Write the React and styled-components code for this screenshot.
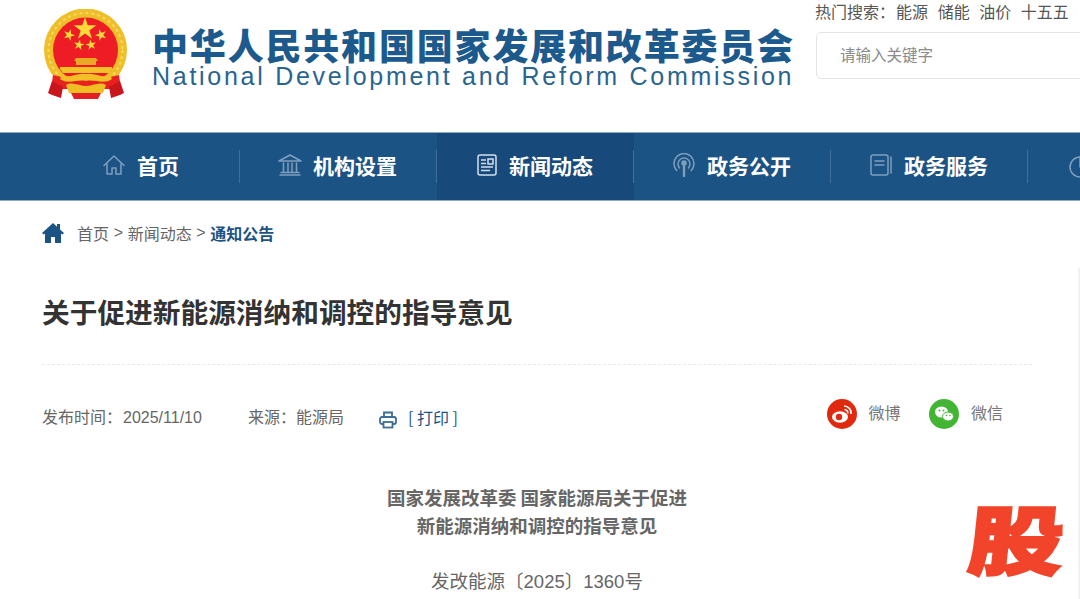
import React from 'react';
import styled, { createGlobalStyle } from 'styled-components';

const GlobalStyle = createGlobalStyle`
  html, body {
    margin: 0;
    padding: 0;
    background: #fff;
    overflow: hidden;
  }
  * {
    box-sizing: border-box;
  }
`;

const Page = styled.div`
  position: relative;
  width: 1080px;
  height: 599px;
  overflow: hidden;
  font-family: "Noto Sans CJK SC", "Liberation Sans", sans-serif;
  color: #666;
`;

const Header = styled.header`
  height: 132px;
  display: flex;
  padding-left: 42px;
`;

const EmblemBox = styled.div`
  width: 88px;
  height: 92px;
  margin: 9px 22px 0 0;
  flex-shrink: 0;
`;

const Brand = styled.div`
  width: 664px;
  flex-shrink: 0;
  padding-top: 24px;
`;

const BrandCn = styled.div`
  font-size: 36px;
  line-height: 40px;
  font-weight: 900;
  letter-spacing: 1.82px;
  color: #1c5a8d;
  white-space: nowrap;
`;

const BrandEn = styled.div`
  font-family: "Liberation Sans", sans-serif;
  font-size: 25px;
  line-height: 24px;
  letter-spacing: 2.72px;
  color: #29648f;
  white-space: nowrap;
`;

const SearchArea = styled.div`
  flex-shrink: 0;
  width: 320px;
`;

const HotRow = styled.div`
  display: flex;
  height: 32px;
  margin-left: -1px;
  font-size: 16px;
  line-height: 23px;
  color: #555;
  white-space: nowrap;
`;

const HotLabel = styled.span`
  margin-right: 1px;
`;

const HotWord = styled.span`
  margin-right: 9.6px;
  color: ${(p) => p.$hot || 'inherit'};
`;

const SearchBox = styled.div`
  height: 47px;
  border: 1px solid #e4e4e4;
  border-radius: 5px;
  padding: 0 0 3px 23px;
  display: flex;
  align-items: center;
  font-size: 15.5px;
  color: #8a8a8a;
`;

const Nav = styled.nav`
  height: 69px;
  display: flex;
  padding-left: 43px;
  background: #1c5385;
  border-top: 1px solid #8fabc4;
  border-bottom: 1px solid #8fabc4;
  overflow: hidden;
`;

const NavItem = styled.div`
  position: relative;
  width: 197px;
  flex-shrink: 0;
  display: flex;
  align-items: center;
  justify-content: ${(p) => (p.$partial ? 'flex-start' : 'center')};
  gap: 11px;
  padding: ${(p) => (p.$partial ? '0 0 0 40px' : '0 2px 3px 0')};
  background: ${(p) => (p.$active ? '#174a7a' : 'transparent')};
  color: #fff;
  font-size: 21px;
  font-weight: 700;

  &::after {
    content: '';
    position: absolute;
    right: 0;
    top: 17px;
    bottom: 17px;
    width: 1px;
    background: #3f709b;
  }
`;

const Crumbs = styled.div`
  height: 67px;
  padding: 0 0 4px 42px;
  display: flex;
  align-items: center;
  font-size: 16px;
  color: #666;
`;

const HomeMark = styled.svg`
  width: 22px;
  height: 20px;
  margin-right: 13px;
`;

const CrumbSep = styled.span`
  font-family: "Liberation Sans", sans-serif;
  margin: 0 4.65px;
`;

const CrumbNow = styled.b`
  color: #1c5385;
`;

const Article = styled.main`
  margin: 0 48px 0 42px;
`;

const Title = styled.h1`
  margin: 0;
  height: 97px;
  padding-top: 23px;
  font-size: 27.7px;
  line-height: 40px;
  font-weight: 700;
  color: #333;
  border-bottom: 1px dashed #e8e8e8;
  white-space: nowrap;
`;

const Meta = styled.div`
  height: 105px;
  display: flex;
  align-items: center;
  padding-bottom: 4px;
  font-size: 16px;
  color: #666;
`;

const MetaText = styled.span`
  margin-right: ${(p) => p.$gap || 0}px;
`;

const Num = styled.span`
  font-family: "Liberation Sans", sans-serif;
`;

const MetaDate = styled(Num)`
  margin-left: 1px;
`;

const PrintIcon = styled.svg`
  width: 18px;
  height: 18px;
  margin-top: 8px;
`;

const PrintLink = styled.span`
  margin: 2px 0 0 11px;
  color: #1c5385;
  font-size: 16px;
  white-space: pre;
`;

const Share = styled.div`
  margin-left: auto;
  margin-right: 29px;
  display: flex;
  align-items: center;
  margin-top: -3px;
`;

const ShareName = styled.span`
  font-size: 16px;
  color: #777;
  margin: 0 29px 4px 11.5px;

  &:last-child {
    margin-right: 0;
  }
`;

const Body = styled.div`
  padding-top: 13px;
  text-align: center;
`;

const Lead = styled.p`
  margin: 0;
  font-size: 18.5px;
  line-height: 28px;
  font-weight: 700;
  color: #666;
`;

const DocNo = styled.p`
  margin: 27px 0 0;
  font-size: 18.5px;
  line-height: 28px;
  color: #666;
`;

const Stamp = styled.div`
  position: absolute;
  left: 971px;
  top: 497px;
  width: 100px;
  font-size: 95px;
  line-height: 100px;
  font-weight: 900;
  color: #f2442a;
  -webkit-text-stroke: 3px #f2442a;
  transform: skewX(-6deg) scaleY(0.79);
  transform-origin: top center;
  text-align: center;
`;

const EdgeLine = styled.div`
  position: absolute;
  right: 0;
  top: 268px;
  bottom: 0;
  width: 2px;
  background: #f1f1f1;
`;

const Star = ({ cx, cy, r, rot = 0 }) => {
  const pts = [];
  for (let i = 0; i < 10; i++) {
    const rad = i % 2 === 0 ? r : r * 0.382;
    const a = ((-90 + rot + i * 36) * Math.PI) / 180;
    pts.push(`${(cx + rad * Math.cos(a)).toFixed(2)},${(cy + rad * Math.sin(a)).toFixed(2)}`);
  }
  return <polygon points={pts.join(' ')} fill="#ffd83a" />;
};

const Emblem = () => (
  <svg width="88" height="92" viewBox="0 0 88 92">
    <circle cx="43.5" cy="41" r="41.5" fill="#eebf2a" />
    <circle cx="43.5" cy="41" r="37" fill="none" stroke="#f8d95e" strokeWidth="2" strokeDasharray="3 3" />
    <circle cx="43.5" cy="41" r="32.5" fill="#ee1c25" />
    <Star cx={43} cy={20} r={12} />
    <Star cx={27} cy={26} r={6} rot={20} />
    <Star cx={59} cy={26} r={6} rot={-20} />
    <Star cx={37} cy={36} r={5.5} rot={10} />
    <Star cx={49} cy={36} r={5.5} rot={-10} />
    <path d="M34 49h20l2 3h-2v4H34v-4h-2z" fill="#e9a924" />
    <path d="M18 58h52v2l-3 4H21l-3-4z" fill="#f3c22b" />
    <path d="M11 66c6 2 9 1 14 4 9 3 11 0 19-1 8 1 10 4 19 1 5-3 8-2 14-4l2 14H9z" fill="#e8201f" />
    <path d="M20 66c8 4 15-3 24-1 9-2 16 5 24 1l2 4c-8 6-17 0-26 2-9-2-18 4-26-2z" fill="#f2c026" />
    <path d="M10 72l11 6-2 11-9-3-4-2zM78 72l-11 6 2 11 9-3 4-2z" fill="#c9161c" />
    <path d="M24 76c6-4 14 1 20 1s14-5 20-1l-3 8H27z" fill="#f0bd22" />
    <path d="M29 84h30l-3 6H32z" fill="#e31e24" />
  </svg>
);

const Line = ({ children, w = 24, h = 24 }) => (
  <svg
    width={w}
    height={h}
    viewBox="0 0 24 24"
    fill="none"
    stroke="#7f9fbd"
    strokeWidth="1.5"
    strokeLinejoin="round"
    strokeLinecap="round"
  >
    {children}
  </svg>
);

const navItems = [
  {
    label: '首页',
    icon: (
      <Line>
        <path d="M2 12.5 12 3l10 9.5M5 11v10h5v-6h4v6h5V11" />
      </Line>
    ),
  },
  {
    label: '机构设置',
    icon: (
      <Line>
        <path d="M1 8 12 2l11 6zM2 22h20M3 19.5h18M5.5 10v9M10 10v9M14 10v9M18.5 10v9" />
      </Line>
    ),
  },
  {
    label: '新闻动态',
    active: true,
    icon: (
      <svg width="22" height="24" viewBox="0 0 22 24" fill="none" stroke="#d5e0ea" strokeWidth="1.5">
        <rect x="2" y="2" width="18" height="20" rx="2" />
        <path d="M5 7h5M5 10.5h5M5 14h12M5 17.5h9" />
        <rect x="12" y="6" width="5" height="5" />
      </svg>
    ),
  },
  {
    label: '政务公开',
    icon: (
      <Line>
        <path d="M12 11v12" strokeWidth="2.4" />
        <circle cx="12" cy="10" r="2" fill="#7f9fbd" />
        <path d="M7.5 15a6 6 0 1 1 9 0M4.8 17.5a10 10 0 1 1 14.4 0" />
      </Line>
    ),
  },
  {
    label: '政务服务',
    icon: (
      <Line>
        <rect x="2" y="2" width="17" height="20" rx="2" />
        <path d="M6 8h9M6 12h9M22 4v16" />
      </Line>
    ),
  },
  {
    partial: true,
    icon: (
      <Line>
        <circle cx="12" cy="12" r="10" />
        <path d="M12 2v10h10" />
      </Line>
    ),
  },
];

const App = () => {
  return (
    <Page>
      <GlobalStyle />
      <Header>
        <EmblemBox>
          <Emblem />
        </EmblemBox>
        <Brand>
          <BrandCn>中华人民共和国国家发展和改革委员会</BrandCn>
          <BrandEn>National Development and Reform Commission</BrandEn>
        </Brand>
        <SearchArea>
          <HotRow>
            <HotLabel>热门搜索：</HotLabel>
            <HotWord>能源</HotWord>
            <HotWord>储能</HotWord>
            <HotWord>油价</HotWord>
            <HotWord>十五五</HotWord>
            <HotWord $hot="#c8741c">电力</HotWord>
          </HotRow>
          <SearchBox>请输入关键字</SearchBox>
        </SearchArea>
      </Header>
      <Nav>
        {navItems.map((item, i) => (
          <NavItem key={i} $active={item.active} $partial={item.partial}>
            {item.icon}
            {item.label && <span>{item.label}</span>}
          </NavItem>
        ))}
      </Nav>
      <Crumbs>
        <HomeMark viewBox="0 0 22 20">
          <path
            d="M11 0 0 10l1.5 1.5L3 10.4V20h6v-6h4v6h6v-9.6l1.5 1.1L22 10l-4-3.6V1h-3v2.7z"
            fill="#1c5385"
          />
        </HomeMark>
        首页<CrumbSep>&gt;</CrumbSep>新闻动态<CrumbSep>&gt;</CrumbSep>
        <CrumbNow>通知公告</CrumbNow>
      </Crumbs>
      <Article>
        <Title>关于促进新能源消纳和调控的指导意见</Title>
        <Meta>
          <MetaText $gap={46}>
            发布时间：<MetaDate>2025/11/10</MetaDate>
          </MetaText>
          <MetaText $gap={35}>来源：能源局</MetaText>
          <PrintIcon viewBox="0 0 18 18" fill="none" stroke="#3d6d96" strokeWidth="1.8">
            <path d="M5 6V1.5h8V6" />
            <rect x="1" y="6" width="16" height="7" rx="2" />
            <rect x="4.5" y="11" width="9" height="5.5" fill="#fff" />
          </PrintIcon>
          <PrintLink>[ 打印 ]</PrintLink>
          <Share>
            <svg width="30" height="30" viewBox="0 0 30 30">
              <circle cx="15" cy="15" r="15" fill="#e0290f" />
              <ellipse cx="13" cy="18" rx="8" ry="5.8" fill="#fff" />
              <circle cx="12" cy="18" r="3.2" fill="#e0290f" />
              <path d="M17 7a7 7 0 0 1 7 8M17.5 10.5a3.5 3.5 0 0 1 3.3 4" fill="none" stroke="#fff" strokeWidth="1.6" />
            </svg>
            <ShareName>微博</ShareName>
            <svg width="30" height="30" viewBox="0 0 30 30">
              <circle cx="15" cy="15" r="15" fill="#43b535" />
              <ellipse cx="12.5" cy="13" rx="6.5" ry="5.5" fill="#fff" />
              <ellipse cx="19" cy="17.5" rx="5.5" ry="4.5" fill="#fff" stroke="#43b535" strokeWidth="1" />
              <circle cx="10.5" cy="11.5" r="1" fill="#43b535" />
              <circle cx="14.5" cy="11.5" r="1" fill="#43b535" />
              <circle cx="17.5" cy="16.5" r=".8" fill="#43b535" />
              <circle cx="21" cy="16.5" r=".8" fill="#43b535" />
            </svg>
            <ShareName>微信</ShareName>
          </Share>
        </Meta>
        <Body>
          <Lead>
            国家发展改革委 国家能源局关于促进
            <br />
            新能源消纳和调控的指导意见
          </Lead>
          <DocNo>
            发改能源〔<Num>2025</Num>〕<Num>1360</Num>号
          </DocNo>
        </Body>
      </Article>
      <EdgeLine />
      <Stamp>股</Stamp>
    </Page>
  );
};

export default App;
